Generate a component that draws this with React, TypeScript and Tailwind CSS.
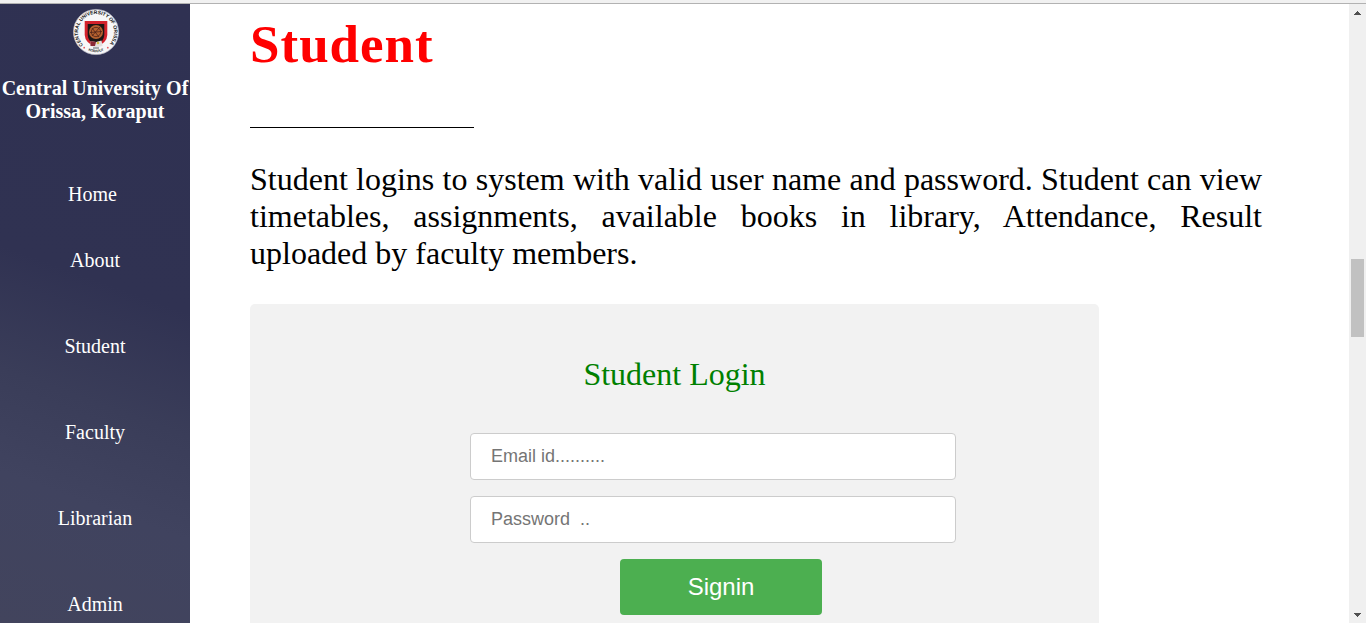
import React from "react";

const links = [
  { label: "Home", row: "h-[66px] pr-[5px]" },
  { label: "About", row: "h-[86px]" },
  { label: "Student", row: "h-[86px]" },
  { label: "Faculty", row: "h-[86px]" },
  { label: "Librarian", row: "h-[86px]" },
  { label: "Admin", row: "h-[23px]" },
];

function Seal() {
  return (
    <svg className="ml-px h-[48px] w-[48px]" viewBox="0 0 48 48" aria-label="University seal">
      <defs>
        <path id="seal-top" d="M11.3 36.8 A18 18 0 1 1 36.7 36.8" />
        <path id="seal-bottom" d="M12 40.2 A20.2 20.2 0 0 0 36 40.2" />
      </defs>
      <circle cx="24" cy="24" r="22.6" fill="#f7f7f8" stroke="#b7b8c3" strokeWidth="0.7" />
      <text fontFamily="Liberation Sans, sans-serif" fontSize="5" fontWeight="700" fill="#151515">
        <textPath href="#seal-top" textLength="83" startOffset="0">CENTRAL UNIVERSITY OF ORISSA</textPath>
      </text>
      <text fontFamily="Liberation Sans, sans-serif" fontSize="3.6" fontWeight="700" fill="#333">
        <textPath href="#seal-bottom" startOffset="50%" textAnchor="middle" textLength="16">KORAPUT</textPath>
      </text>
      <circle cx="12.2" cy="39.7" r="0.9" fill="#e35a60" />
      <circle cx="35.8" cy="39.7" r="0.9" fill="#e35a60" />
      <path d="M12.7 13 H35.3 V27 Q35 35 24 39 Q13 35 12.7 27 Z" fill="#d3222c" />
      <path d="M15.7 16 H32.3 V27 Q32 34 24 37 Q16 34 15.7 27 Z" fill="#1c1514" />
      <circle cx="24" cy="24" r="7" fill="#b5612f" />
      <g stroke="#4b2118" strokeWidth="0.8" fill="none">
        <circle cx="24" cy="24" r="4.7" />
        <path d="M18 24.5 L30 23.5 M20 20 L27 29 M28 19 L20 28" />
      </g>
      <path d="M18.5 33 L24 34 L29.5 32.5 L30.5 38 L24 39.5 L18.5 38 Z" fill="#e3dedf" />
      <path d="M18.5 33 L24 34 L23 38 L18.5 38 Z" fill="#8b2936" />
      <circle cx="26" cy="35" r="1.3" fill="#d3ba42" />
      <path d="M21 40 H27" stroke="#71787e" strokeWidth="1.2" />
    </svg>
  );
}

function Sidebar() {
  return (
    <aside className="flex w-[190px] shrink-0 flex-col items-center overflow-hidden bg-[linear-gradient(200deg,#2f3152_0%,#303252_45%,#3a3d59_63%,#40435f_78%,#42445d_100%)] text-[20px] leading-[23px] text-white">
      <div className="mt-[4px] h-[48px]">
        <Seal />
      </div>
      <p className="mt-[21px] whitespace-nowrap text-center font-bold">
        Central University Of
        <br />
        Orissa, Koraput
      </p>
      <nav className="mt-[60px] flex w-full flex-col">
        {links.map((link) => (
          <a key={link.label} href="#" className={`block shrink-0 text-center ${link.row}`}>
            {link.label}
          </a>
        ))}
      </nav>
    </aside>
  );
}

function LoginForm() {
  const field =
    "block h-[47px] w-[486px] rounded-[4px] border border-[#cccccc] bg-white px-5 text-[18px] placeholder:text-[#757575] outline-none font-['Liberation_Sans',Arial,sans-serif]";
  return (
    <form className="mt-[32px] h-[400px] w-[849px] rounded-[5px] bg-[#f2f2f2] pt-[52px]">
      <h2 className="text-center text-[32px] leading-[37px] text-[#008000]">Student Login</h2>
      <div className="ml-[220px] mt-[40px] flex flex-col gap-4">
        <input className={field} type="text" placeholder="Email id.........." />
        <input className={field} type="password" placeholder="Password  .." />
        <button
          type="button"
          className="ml-[150px] h-[56px] w-[202px] rounded-[4px] bg-[#4caf50] font-['Liberation_Sans',Arial,sans-serif] text-[24px] text-white"
        >
          Signin
        </button>
      </div>
    </form>
  );
}

function Scrollbar() {
  return (
    <div className="flex w-[17px] shrink-0 flex-col items-center bg-[#f0f0f0]">
      <svg className="mt-[7px] h-[4px] w-[7px]" viewBox="0 0 7 4" shapeRendering="crispEdges" fill="#505050">
        <path d="M3 0h1v1h1v1h1v1h1v1H0V3h1V2h1V1h1z" />
      </svg>
      <div className="mt-[244px] h-[78px] w-[13px] bg-[#c1c1c1]" />
      <svg className="mb-[6px] mt-auto h-[4px] w-[7px]" viewBox="0 0 7 4" shapeRendering="crispEdges" fill="#505050">
        <path d="M0 0h7v1H6v1H5v1H4v1H3V3H2V2H1V1H0z" />
      </svg>
    </div>
  );
}

export default function App() {
  return (
    <div className="flex h-[623px] w-[1366px] flex-col overflow-hidden bg-white font-['Liberation_Serif','Times_New_Roman',serif] text-black">
      <div className="h-[4px] shrink-0 border-b border-[#b2b2b2] bg-[#f1f1f1]" />
      <div className="flex min-h-0 flex-1">
        <Sidebar />
        <main className="min-w-0 flex-1 overflow-hidden pl-[60px]">
          <h1 className="mt-[9px] text-[53px] font-bold leading-[63px] tracking-[1px] text-[#ff0000]">Student</h1>
          <div className="mt-[51px] h-px w-[224px] bg-black" />
          <p className="mt-[33px] w-[1012px] text-justify text-[32px] leading-[37px]">
            Student logins to system with valid user name and password. Student can view timetables, assignments,
            available books in library, Attendance, Result uploaded by faculty members.
          </p>
          <LoginForm />
        </main>
        <Scrollbar />
      </div>
    </div>
  );
}
